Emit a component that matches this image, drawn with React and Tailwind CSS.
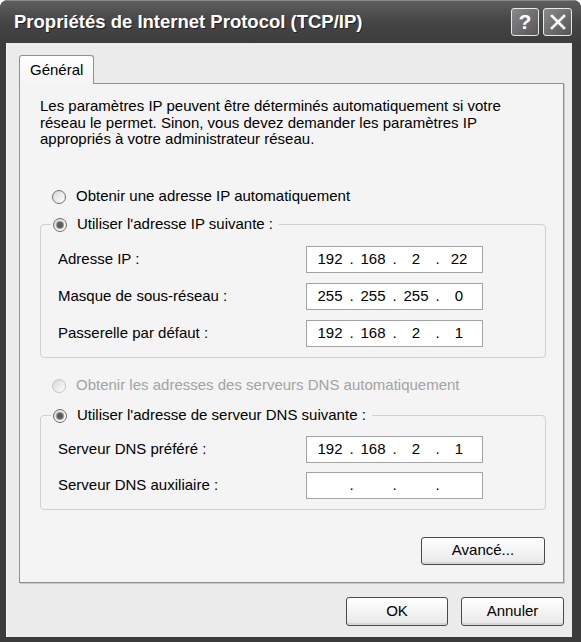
import React from 'react';

function Radio({ checked, disabled }) {
  return (
    <span
      className={
        'flex h-[14px] w-[14px] shrink-0 items-center justify-center rounded-full border bg-linear-to-br from-[#d8d8d8] to-white ' +
        (disabled ? 'border-[#c4c4c4]' : 'border-[#6e6e6e]')
      }
    >
      {checked && <span className="h-[6px] w-[6px] rounded-full bg-[#5c5c5c] ring-1 ring-[#9a9a9a]" />}
    </span>
  );
}

function IpField({ octets }) {
  return (
    <div className="flex h-[27px] w-[177px] items-center border border-[#a3a3a3] bg-white pl-[5px]">
      {octets.map((o, i) => (
        <React.Fragment key={i}>
          <span className="w-[36px] text-center">{o}</span>
          {i < 3 && <span className="w-[7px] text-center">.</span>}
        </React.Fragment>
      ))}
    </div>
  );
}

function Row({ label, octets }) {
  return (
    <div className="flex items-center pl-[17px]">
      <span className="w-[248px]">{label}</span>
      <IpField octets={octets} />
    </div>
  );
}

function XpButton({ children, className }) {
  return (
    <button
      className={
        'flex items-center justify-center rounded-[3px] border border-[#4a4a4a] bg-linear-to-b from-white to-[#e8e8e8] font-normal antialiased shadow-[inset_0_-2px_0_#d6d6d6] ' +
        className
      }
    >
      {children}
    </button>
  );
}

export default function App() {
  return (
    <div className="h-[642px] w-[581px] bg-white font-['Liberation_Sans',Arial,sans-serif] text-[15px] text-black">
      <div className="flex h-full flex-col overflow-hidden rounded-t-[8px] bg-[#3b3b3b]">
        {/* title bar */}
        <div className="flex h-[43px] shrink-0 items-center border-t border-[#8a8a8a] bg-linear-to-b from-[#5e5e5e] via-[#454545] to-[#3d3d3d] pl-[14px] pr-[9px]">
          <span className="flex-1 text-[18.5px] font-bold text-white [text-shadow:1px_1px_0_#222]">
            Propriétés de Internet Protocol (TCP/IP)
          </span>
          <div className="flex gap-[4px]">
            <div className="flex h-[28px] w-[28px] items-center justify-center rounded-[3px] border border-[#e8e8e8] bg-linear-to-br from-[#8a8a8a] to-[#565656] text-[21px] font-bold text-white">
              ?
            </div>
            <div className="flex h-[28px] w-[29px] items-center justify-center rounded-[3px] border border-[#e8e8e8] bg-linear-to-br from-[#8a8a8a] to-[#565656]">
              <svg width="16" height="16" viewBox="0 0 16 16">
                <path d="M2 2 L14 14 M14 2 L2 14" stroke="white" strokeWidth="2.6" strokeLinecap="square" />
              </svg>
            </div>
          </div>
        </div>

        {/* frame */}
        <div className="flex flex-1 flex-col pb-[5px] pl-[6px] pr-[9px]">
          <div className="flex flex-1 flex-col border-l border-[#f8f8f8] bg-[#ebebeb] pl-[12px] pr-[8px] pt-[12px]">
            {/* tab */}
            <div className="relative z-10 -mb-px flex h-[29px] w-[75px] items-center rounded-t-[3px] border border-b-0 border-[#919191] bg-linear-to-b from-white to-[#f4f4f4] pl-[10px]">
              Général
            </div>

            {/* panel */}
            <div className="flex h-[500px] flex-col border border-[#919191] bg-[#f4f4f4] pl-[20px] pr-[17px] pt-[14px] shadow-[1px_1px_0_#c8c8c8]">
              <p className="leading-[16.5px]">
                Les paramètres IP peuvent être déterminés automatiquement si votre
                <br />
                réseau le permet. Sinon, vous devez demander les paramètres IP
                <br />
                appropriés à votre administrateur réseau.
              </p>

              <div className="ml-[12px] mt-[40px] flex h-[18px] items-center gap-[10px]">
                <Radio />
                <span>Obtenir une adresse IP automatiquement</span>
              </div>

              <fieldset className="mt-[10px] rounded-[4px] border border-[#d0d0d0] pb-[10px]">
                <legend className="ml-[10px] px-[2px]">
                  <span className="flex h-[18px] items-center gap-[10px]">
                    <Radio checked />
                    <span className="pr-[4px]">Utiliser l'adresse IP suivante :</span>
                  </span>
                </legend>
                <div className="mt-[12px] flex flex-col gap-[10px]">
                  <Row label="Adresse IP :" octets={['192', '168', '2', '22']} />
                  <Row label="Masque de sous-réseau :" octets={['255', '255', '255', '0']} />
                  <Row label="Passerelle par défaut :" octets={['192', '168', '2', '1']} />
                </div>
              </fieldset>

              <div className="ml-[12px] mt-[19px] flex h-[18px] items-center gap-[10px] text-[#a3a3a3]">
                <Radio disabled />
                <span>Obtenir les adresses des serveurs DNS automatiquement</span>
              </div>

              <fieldset className="mt-[12px] rounded-[4px] border border-[#d0d0d0] pb-[10px]">
                <legend className="ml-[10px] px-[2px]">
                  <span className="flex h-[18px] items-center gap-[10px]">
                    <Radio checked />
                    <span className="pr-[4px]">Utiliser l'adresse de serveur DNS suivante :</span>
                  </span>
                </legend>
                <div className="mt-[11px] flex flex-col gap-[9px]">
                  <Row label="Serveur DNS préféré :" octets={['192', '168', '2', '1']} />
                  <Row label="Serveur DNS auxiliaire :" octets={['', '', '', '']} />
                </div>
              </fieldset>

              <XpButton className="mr-[1px] mt-[27px] h-[28px] w-[124px] self-end">Avancé...</XpButton>
            </div>

            {/* footer */}
            <div className="mt-[14px] flex justify-end gap-[13px]">
              <XpButton className="h-[29px] w-[102px]">OK</XpButton>
              <XpButton className="h-[29px] w-[103px]">Annuler</XpButton>
            </div>
          </div>
        </div>
      </div>
    </div>
  );
}
